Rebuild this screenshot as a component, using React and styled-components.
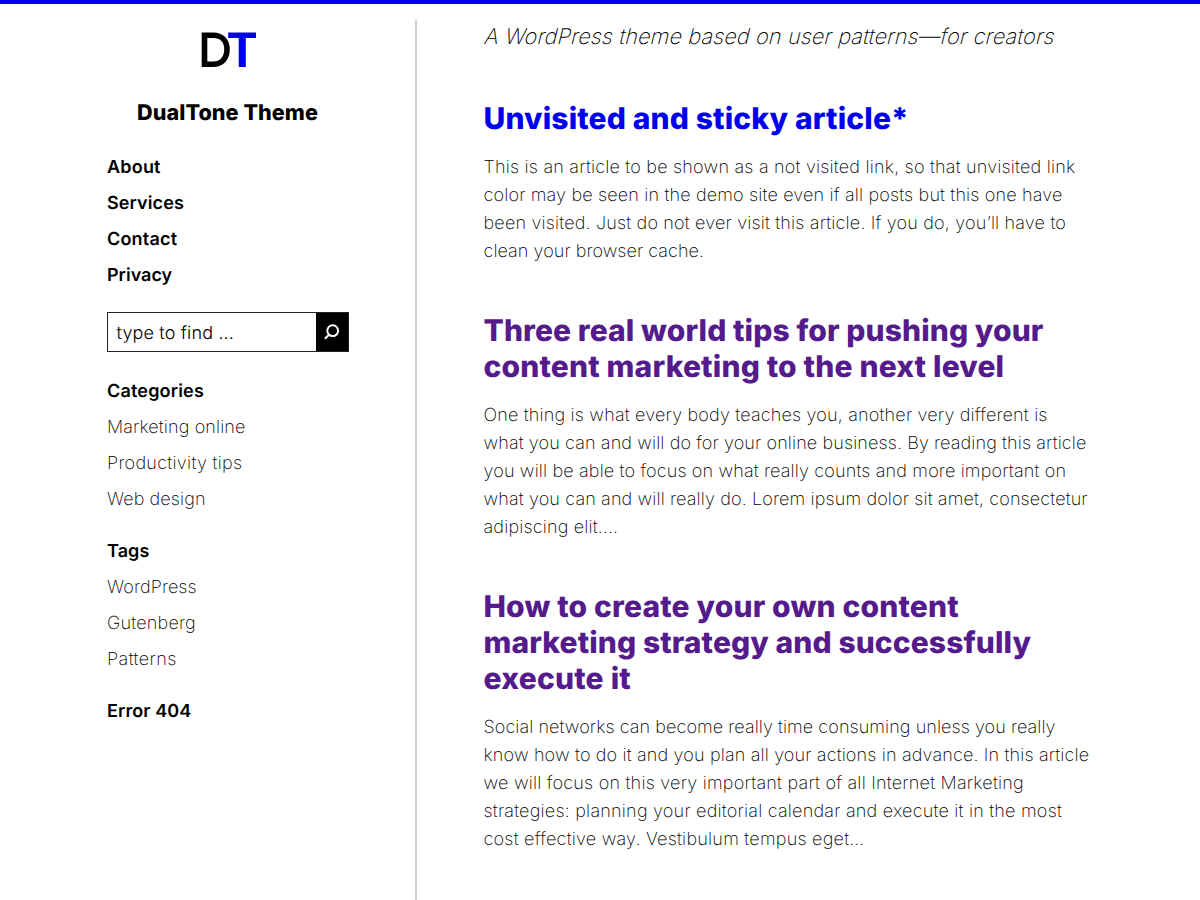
import React from "react";
import styled, { createGlobalStyle } from "styled-components";

const Global = createGlobalStyle`
  * { box-sizing: border-box; }
  html, body { margin: 0; padding: 0; background: #fff; overflow: hidden; }
  body {
    font-family: Inter, "Liberation Sans", sans-serif;
    color: #000;
    font-weight: 200;
    text-rendering: geometricPrecision;
  }
  a { text-decoration: none; }
`;
const Page = styled.div`
  height: 900px;
  border-top: 4px solid #0000f0;
  padding-top: 16px;
  display: flex;
  overflow: hidden;
`;
const Sidebar = styled.aside`
  width: 417px;
  flex: none;
  padding: 12px 67px 0 107px;
  border-right: 2px solid #d0d0d0;
`;
const Logo = styled.svg`
  display: block;
  width: 56px;
  height: 36px;
  margin: 0 auto;
`;
const SiteTitle = styled.div`
  margin-top: 27px;
  text-align: center;
  font-size: 21.6px;
  line-height: 36px;
  letter-spacing: 0.05px;
  font-weight: 800;
  white-space: nowrap;
`;
const Menu = styled.nav`
  display: flex;
  flex-direction: column;
  margin-top: ${(p) => p.$gap}px;
`;
const Item = styled.a`
  font-size: 18px;
  line-height: 36px;
  letter-spacing: ${(p) => p.$tracking}px;
  font-weight: ${(p) => (p.$strong ? 600 : 200)};
  color: #000;
  white-space: nowrap;
`;
const Search = styled.form`
  display: flex;
  width: 242px;
  height: 40px;
  margin-top: 18px;
  border: 1px solid #222;
`;
const Field = styled.div`
  flex: 1;
  padding: 2px 0 0 8.5px;
  font-size: 18px;
  font-weight: 300;
  line-height: 38px;
  letter-spacing: 0.15px;
`;
const SearchButton = styled.div`
  width: 32px;
  background: #000;
  display: flex;
  align-items: center;
  justify-content: center;
`;
const Main = styled.main`
  width: 640px;
  padding: 1px 0 0 66.5px;
`;
const Tagline = styled.p`
  margin: 0;
  font-size: 21.6px;
  line-height: 32px;
  letter-spacing: 0.16px;
  white-space: nowrap;
  transform: skewX(-14deg);
  transform-origin: 0 20px;
`;
const Article = styled.article`
  margin-top: 48px;
`;
const Heading = styled.h2`
  margin: 0;
  font-size: 30px;
  line-height: 36px;
  font-weight: 800;
  color: ${(p) => (p.$visited ? "#551a8b" : "#0000ee")};
  white-space: nowrap;
`;
const Excerpt = styled.p`
  margin: 17px 0 -1px;
  font-size: 18px;
  line-height: 28px;
  white-space: nowrap;
`;
const Line = styled.span`
  display: block;
  letter-spacing: ${(p) => p.$tracking}px;
`;
const lines = (list) =>
  list.map(([text, tracking]) => <Line key={text} $tracking={tracking}>{text}</Line>);
const items = (list, strong) =>
  list.map(([text, tracking]) => (
    <Item key={text} $strong={strong} $tracking={tracking}>{text}</Item>
  ));

const articles = [
  {
    title: [["Unvisited and sticky article*", 0.14]],
    text: [
      ["This is an article to be shown as a not visited link, so that unvisited link", 0.213],
      ["color may be seen in the demo site even if all posts but this one have", 0.171],
      ["been visited. Just do not ever visit this article. If you do, you’ll have to", 0.187],
      ["clean your browser cache.", 0.06],
    ],
  },
  {
    visited: true,
    title: [
      ["Three real world tips for pushing your", 0.1],
      ["content marketing to the next level", 0.17],
    ],
    text: [
      ["One thing is what every body teaches you, another very different is", 0.187],
      ["what you can and will do for your online business. By reading this article", 0.122],
      ["you will be able to focus on what really counts and more important on", 0.16],
      ["what you can and will really do. Lorem ipsum dolor sit amet, consectetur", 0.14],
      ["adipiscing elit.…", 0.18],
    ],
  },
  {
    visited: true,
    title: [
      ["How to create your own content", 0.16],
      ["marketing strategy and successfully", 0.1],
      ["execute it", 0.22],
    ],
    text: [
      ["Social networks can become really time consuming unless you really", 0.076],
      ["know how to do it and you plan all your actions in advance. In this article", 0.16],
      ["we will focus on this very important part of all Internet Marketing", 0.227],
      ["strategies: planning your editorial calendar and execute it in the most", 0.225],
      ["cost effective way. Vestibulum tempus eget…", 0.238],
    ],
  },
];

export default function App() {
  return (
    <>
      <Global />
      <Page>
        <Sidebar>
          <Logo viewBox="0 0 56 36">
            <path d="M4.500 3.200H13C22 3.200 27 9 27 17.500S22 32.300 13 32.300H4.500Z" fill="none" stroke="#000" strokeWidth="5.600" />
            <path d="M28.200 0.400H56V6H45.800V35H38.700V6H28.200Z" fill="#0000f0" />
          </Logo>
          <SiteTitle>DualTone Theme</SiteTitle>
          <Menu $gap={19}>
            {items([["About", 0.2], ["Services", 0.1], ["Contact", 0.2], ["Privacy", 0]], true)}
          </Menu>
          <Search>
            <Field>type to find ...</Field>
            <SearchButton>
              <svg width="32" height="32" viewBox="0 0 32 32" fill="none" stroke="#fff">
                <circle cx="16.700" cy="14.700" r="5.400" strokeWidth="2" />
                <path d="M13 18.700L8.800 22.800" strokeWidth="2" />
              </svg>
            </SearchButton>
          </Search>
          <Menu $gap={22}>
            {items([["Categories", 0.18]], true)}
            {items([["Marketing online", 0.13], ["Productivity tips", 0.3], ["Web design", 0.1]])}
          </Menu>
          <Menu $gap={16}>
            {items([["Tags", 0.1]], true)}
            {items([["WordPress", 0.12], ["Gutenberg", 0.2], ["Patterns", 0.45]])}
          </Menu>
          <Menu $gap={16}>{items([["Error 404", 0.1]], true)}</Menu>
        </Sidebar>
        <Main>
          <Tagline>A WordPress theme based on user patterns—for creators</Tagline>
          {articles.map((a) => (
            <Article key={a.title[0][0]}>
              <Heading $visited={a.visited}>{lines(a.title)}</Heading>
              <Excerpt>{lines(a.text)}</Excerpt>
            </Article>
          ))}
        </Main>
      </Page>
    </>
  );
}
